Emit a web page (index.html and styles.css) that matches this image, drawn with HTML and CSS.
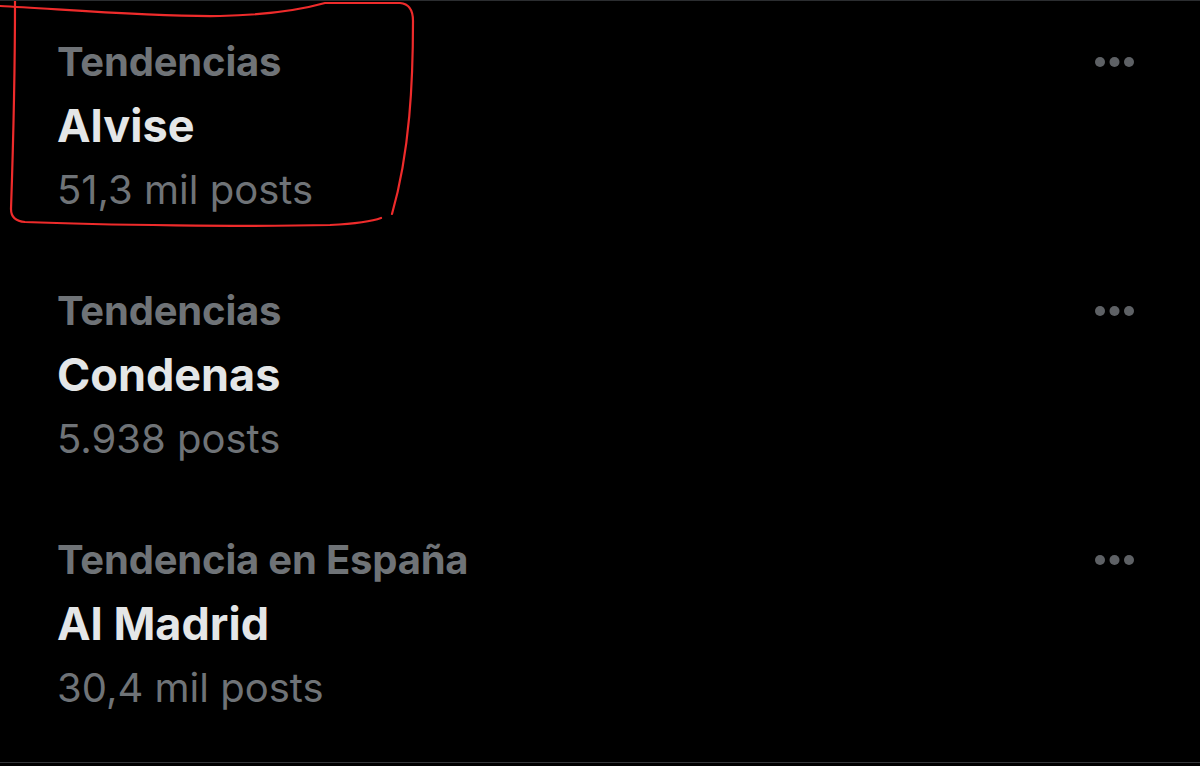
FILE: index.html
```html
<!DOCTYPE html>
<html lang="es">
<head>
<meta charset="utf-8">
<title>Tendencias</title>
<link rel="stylesheet" href="styles.css">
</head>
<body>
<main class="trends">
  <section class="trend">
    <div class="trend-head">
      <span class="trend-context">Tendencias</span>
      <span class="more" aria-label="Más opciones"><svg width="44" height="12" viewBox="0 0 44 12"><circle cx="6" cy="6" r="5"/><circle cx="20.5" cy="6" r="5"/><circle cx="35" cy="6" r="5"/></svg></span>
    </div>
    <div class="trend-name">Alvise</div>
    <div class="trend-count">51,3 mil posts</div>
  </section>
  <section class="trend">
    <div class="trend-head">
      <span class="trend-context">Tendencias</span>
      <span class="more" aria-label="Más opciones"><svg width="44" height="12" viewBox="0 0 44 12"><circle cx="6" cy="6" r="5"/><circle cx="20.5" cy="6" r="5"/><circle cx="35" cy="6" r="5"/></svg></span>
    </div>
    <div class="trend-name">Condenas</div>
    <div class="trend-count">5.938 posts</div>
  </section>
  <section class="trend">
    <div class="trend-head">
      <span class="trend-context">Tendencia en España</span>
      <span class="more" aria-label="Más opciones"><svg width="44" height="12" viewBox="0 0 44 12"><circle cx="6" cy="6" r="5"/><circle cx="20.5" cy="6" r="5"/><circle cx="35" cy="6" r="5"/></svg></span>
    </div>
    <div class="trend-name">Al Madrid</div>
    <div class="trend-count">30,4 mil posts</div>
  </section>
  <svg class="markup" width="420" height="230" viewBox="0 0 420 230" aria-hidden="true">
    <path d="M0,5 C60,8 150,16 220,15 C265,14 300,9 325,2 L400,2 Q413,3 413,20 C413,80 410,150 392,213"/>
    <path d="M15,0 C15,80 13,150 11,208 Q11,220 25,221 C100,224 250,226 330,224 Q368,222 381,217"/>
  </svg>
</main>
</body>
</html>
```

FILE: styles.css
```css
html, body {
  margin: 0;
  padding: 0;
  background: #000;
}

body {
  font-family: Inter, "Liberation Sans", Arial, sans-serif;
  -webkit-font-smoothing: antialiased;
}

.trends {
  position: relative;
  height: 763px;
  box-sizing: border-box;
  border-top: 1px solid #2b2d30;
  border-bottom: 1px solid #35373a;
  overflow: hidden;
}

.trend {
  display: flex;
  flex-direction: column;
  padding: 30px 62px 29px 57px;
}

.trend-head {
  display: flex;
  align-items: center;
  justify-content: space-between;
  height: 62px;
}

.trend-context {
  font-size: 40px;
  line-height: 62px;
  font-weight: 700;
  color: #6f7377;
  letter-spacing: -0.2px;
}

.more {
  display: flex;
  align-items: center;
}

.more svg {
  fill: #5e6165;
}

.trend-name {
  font-size: 45px;
  line-height: 66px;
  font-weight: 700;
  color: #e4e6e7;
}

.trend-count {
  font-size: 40px;
  line-height: 62px;
  font-weight: 400;
  color: #6f7377;
}

.markup {
  position: absolute;
  left: 0;
  top: 0;
  fill: none;
  stroke: #ee2b2b;
  stroke-width: 2.2;
  stroke-linecap: round;
}
```
